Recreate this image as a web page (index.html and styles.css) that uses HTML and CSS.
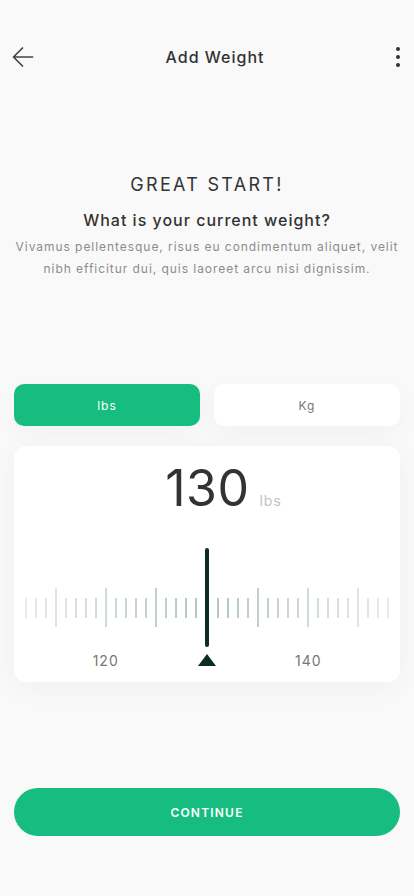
FILE: index.html
```html
<!DOCTYPE html>
<html lang="en">
<head>
<meta charset="utf-8">
<meta name="viewport" content="width=device-width, initial-scale=1">
<title>Add Weight</title>
<link rel="stylesheet" href="styles.css">
</head>
<body>
<div class="app">
  <header class="topbar">
    <button class="icon-btn back" aria-label="Back">
      <svg width="24" height="24" viewBox="0 0 24 24" fill="none" stroke="#444" stroke-width="1.7" stroke-linecap="round" stroke-linejoin="round"><path d="M21.5 12H2.5M11.5 3L2.5 12L11.5 21"/></svg>
    </button>
    <h1 class="title">Add Weight</h1>
    <button class="icon-btn more" aria-label="More">
      <svg width="6" height="20" viewBox="0 0 6 20" fill="#333"><circle cx="3" cy="2" r="2"/><circle cx="3" cy="10" r="2"/><circle cx="3" cy="18" r="2"/></svg>
    </button>
  </header>

  <section class="intro">
    <h2 class="headline">GREAT START!</h2>
    <p class="question">What is your current weight?</p>
    <p class="desc">Vivamus pellentesque, risus eu condimentum aliquet, velit nibh efficitur dui, quis laoreet arcu nisi dignissim.</p>
  </section>

  <div class="units">
    <button class="unit active">lbs</button>
    <button class="unit">Kg</button>
  </div>

  <div class="card">
    <div class="value"><span class="num">130</span><span class="unit-label">lbs</span></div>
    <div class="ruler">
      <div class="ticks">
        <div class="group">
          <i class="tick"></i><i class="tick"></i><i class="tick"></i><i class="tick long"></i>
          <i class="tick"></i><i class="tick"></i><i class="tick"></i><i class="tick"></i><i class="tick long"><span class="lbl">120</span></i>
          <i class="tick"></i><i class="tick"></i><i class="tick"></i><i class="tick"></i><i class="tick long"></i>
          <i class="tick"></i><i class="tick"></i><i class="tick"></i><i class="tick"></i>
        </div>
        <div class="group">
          <i class="tick"></i><i class="tick"></i><i class="tick"></i><i class="tick"></i><i class="tick long"></i>
          <i class="tick"></i><i class="tick"></i><i class="tick"></i><i class="tick"></i><i class="tick long"><span class="lbl">140</span></i>
          <i class="tick"></i><i class="tick"></i><i class="tick"></i><i class="tick"></i><i class="tick long"></i>
          <i class="tick"></i><i class="tick"></i><i class="tick"></i>
        </div>
      </div>
      <div class="fade"></div>
      <div class="pointer"></div>
      <div class="arrow"></div>
    </div>
  </div>

  <button class="continue">CONTINUE</button>
</div>
</body>
</html>
```

FILE: styles.css
```css
* { box-sizing: border-box; }
html, body { margin: 0; padding: 0; }
body {
  background: #f9f9f9;
  font-family: Inter, "Noto Sans", "Liberation Sans", sans-serif;
  color: #333;
}
.app {
  width: 414px;
  min-height: 896px;
  padding: 0 14px;
  display: flex;
  flex-direction: column;
}
.topbar {
  margin-top: 40px;
  height: 34px;
  display: flex;
  align-items: center;
  justify-content: space-between;
}
.icon-btn {
  border: 0;
  background: none;
  padding: 0;
  display: flex;
  align-items: center;
  justify-content: center;
}
.back { margin-left: -3px; width: 24px; height: 24px; }
.more { margin-right: -1px; width: 6px; height: 20px; }
.title {
  margin: 0;
  font-size: 16px;
  font-weight: 500;
  letter-spacing: 1px;
  color: #333;
  line-height: 34px;
}
.intro {
  margin-top: 99px;
  text-align: center;
}
.headline {
  margin: 0;
  font-size: 18px;
  line-height: 24px;
  font-weight: 400;
  letter-spacing: 2.3px;
  color: #333;
}
.question {
  margin: 12px 0 0;
  font-size: 16px;
  line-height: 22px;
  font-weight: 500;
  letter-spacing: 1px;
  color: #333;
}
.desc {
  margin: 5px 0 0;
  font-size: 12px;
  line-height: 22px;
  letter-spacing: 0.95px;
  color: #8c8c8c;
}
.units {
  margin-top: 104px;
  display: flex;
  gap: 14px;
}
.unit {
  flex: 1;
  height: 42px;
  border: 0;
  border-radius: 10px;
  background: #fff;
  font-family: inherit;
  font-size: 12px;
  letter-spacing: 1px;
  color: #777;
  box-shadow: 0 6px 24px rgba(0, 0, 0, 0.035);
}
.unit.active {
  background: #17bd80;
  color: #fff;
}
.card {
  margin-top: 20px;
  background: #fff;
  border-radius: 12px;
  padding: 17px 0 16px;
  box-shadow: 0 6px 30px rgba(0, 0, 0, 0.04);
}
.value {
  display: flex;
  justify-content: center;
  align-items: baseline;
  gap: 10px;
  padding-left: 33px;
}
.num {
  font-size: 50px;
  line-height: 50px;
  font-weight: 400;
  color: #333;
  letter-spacing: 0.5px;
}
.unit-label {
  font-size: 14px;
  color: #c2c2c2;
  letter-spacing: 1px;
}
.ruler {
  position: relative;
  margin-top: 35px;
  height: 118px;
}
.ticks {
  position: absolute;
  left: 0;
  right: 0;
  top: 40px;
  height: 39px;
  display: flex;
  justify-content: center;
  align-items: center;
  gap: 20.6px;
}
.group {
  display: flex;
  align-items: center;
  gap: 8px;
}
.tick {
  display: block;
  position: relative;
  width: 2px;
  height: 20px;
  background: #b4c8bf;
}
.tick.long { height: 39px; }
.fade {
  position: absolute;
  left: 0;
  right: 0;
  top: 40px;
  height: 39px;
  background: linear-gradient(to right, rgba(255,255,255,0.65) 4%, rgba(255,255,255,0) 48%, rgba(255,255,255,0) 52%, rgba(255,255,255,0.65) 96%);
  pointer-events: none;
}
.lbl {
  position: absolute;
  top: 65px;
  left: 50%;
  transform: translateX(-50%);
  font-style: normal;
  font-size: 14px;
  line-height: 16px;
  letter-spacing: 1px;
  color: #777;
}
.pointer {
  position: absolute;
  left: 50%;
  top: 0;
  width: 4px;
  height: 99px;
  margin-left: -2px;
  border-radius: 2px;
  background: #0b2d22;
}
.arrow {
  position: absolute;
  left: 50%;
  bottom: 0;
  margin-left: -9px;
  width: 0;
  height: 0;
  border-left: 9px solid transparent;
  border-right: 9px solid transparent;
  border-bottom: 12px solid #0b2d22;
}
.continue {
  margin-top: 106px;
  height: 48px;
  border: 0;
  border-radius: 24px;
  background: #17bd80;
  color: #fff;
  font-family: inherit;
  font-size: 12px;
  font-weight: 600;
  letter-spacing: 1.2px;
}
```
